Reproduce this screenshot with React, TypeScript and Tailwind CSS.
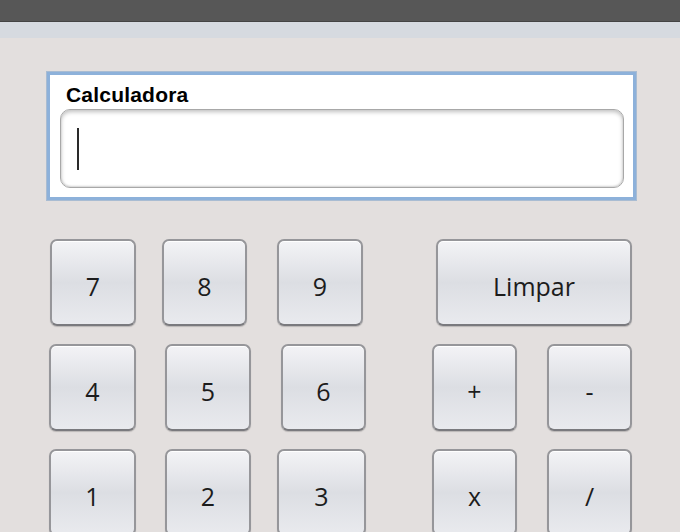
import React from 'react';

type BtnProps = { label: string; className: string };

function Btn({ label, className }: BtnProps) {
  return (
    <button
      className={
        'h-[87px] shrink-0 rounded-[7px] border-2 border-[#96969a] border-b-[#7a7a7e] bg-gradient-to-b from-[#f3f3f6] via-[#dcdee3] to-[#e9eaee] pt-[8px] text-[25px] leading-none text-[#1c1c1c] shadow-[inset_0_1px_0_#ffffff,0_1px_1px_rgba(0,0,0,0.18)] ' +
        className
      }
      style={{ fontFamily: '"Open Sans", "Noto Sans", sans-serif' }}
    >
      {label}
    </button>
  );
}

export default function App() {
  return (
    <div className="flex h-[532px] w-[680px] flex-col overflow-hidden bg-[#e3dfde]">
      <div className="h-[22px] shrink-0 border-b border-[#444] bg-[#575757]" />
      <div className="h-[16px] shrink-0 bg-[#d6dae0]" />

      {/* campo */}
      <div className="ml-[47px] mt-[34px] h-[128px] w-[589px] shrink-0 border-[3px] border-[#8db1da] bg-white shadow-[0_0_0_1px_#a9bcd2]">
        <div
          className="ml-[16px] mt-[9px] h-[22px] text-[21px] font-bold leading-[22px] tracking-[0.2px] text-black"
          style={{ fontFamily: '"Liberation Sans", Arial, sans-serif' }}
        >
          Calculadora
        </div>
        <div className="ml-[10px] mt-[3px] flex h-[79px] w-[564px] items-center rounded-[10px] border border-[#a8a8a8] bg-white pl-[16px] shadow-[inset_0_2px_4px_rgba(0,0,0,0.25),inset_0_-1px_2px_rgba(0,0,0,0.14)]">
          <div className="h-[42px] w-[2px] bg-[#2a2a2a]" />
        </div>
      </div>

      {/* teclado */}
      <div className="mt-[39px] flex shrink-0">
        <Btn label="7" className="ml-[50px] w-[86px]" />
        <Btn label="8" className="ml-[26px] w-[85px]" />
        <Btn label="9" className="ml-[30px] w-[86px]" />
        <Btn label="Limpar" className="ml-[73px] w-[196px]" />
      </div>
      <div className="mt-[18px] flex shrink-0">
        <Btn label="4" className="ml-[49px] w-[87px]" />
        <Btn label="5" className="ml-[29px] w-[86px]" />
        <Btn label="6" className="ml-[30px] w-[85px]" />
        <Btn label="+" className="ml-[66px] w-[85px]" />
        <Btn label="-" className="ml-[30px] w-[85px]" />
      </div>
      <div className="mt-[18px] flex shrink-0">
        <Btn label="1" className="ml-[49px] w-[87px]" />
        <Btn label="2" className="ml-[29px] w-[86px]" />
        <Btn label="3" className="ml-[26px] w-[89px]" />
        <Btn label="x" className="ml-[66px] w-[85px]" />
        <Btn label="/" className="ml-[30px] w-[85px]" />
      </div>
    </div>
  );
}
